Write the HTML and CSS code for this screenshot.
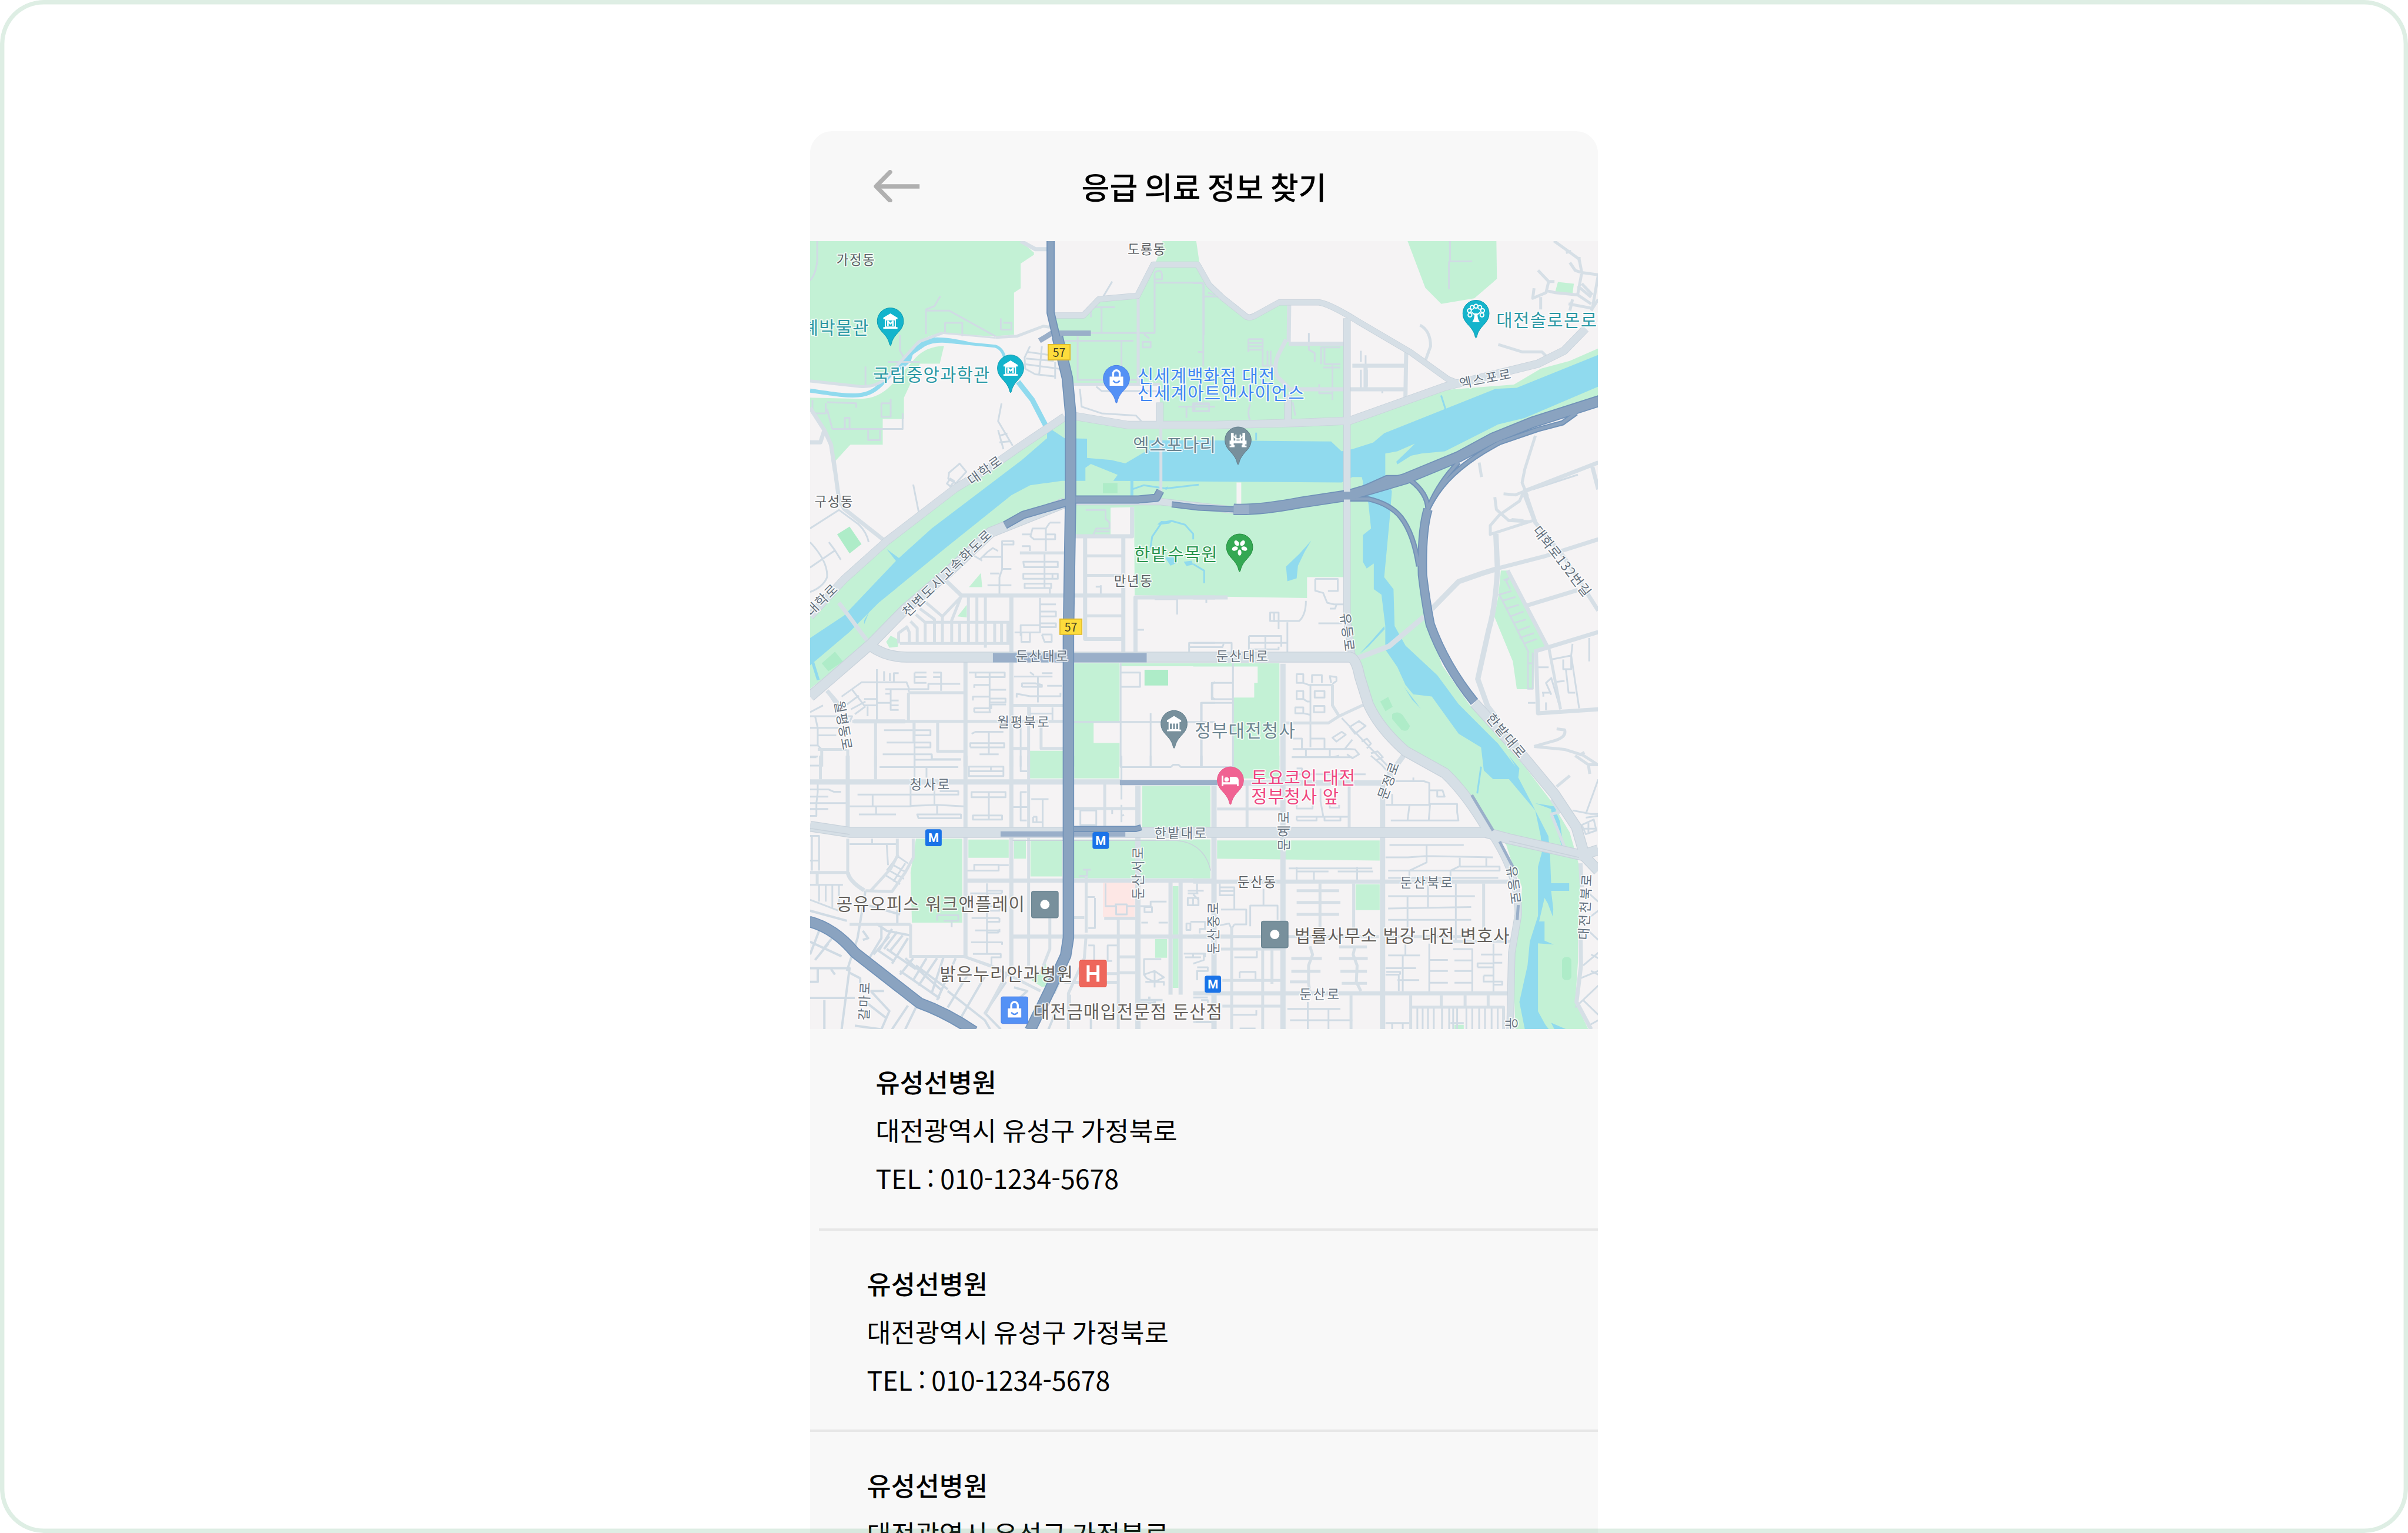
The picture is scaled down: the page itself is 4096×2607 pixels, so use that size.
FILE: index.html
```html
<!DOCTYPE html>
<html lang="ko">
<head>
<meta charset="utf-8">
<title>응급 의료 정보 찾기</title>
<link rel="stylesheet" href="styles.css">
</head>
<body>
<main class="stage">
<section class="phone">
<header class="topbar">
<svg class="back" viewBox="0 0 88 60"><path class="shaft" d="M4 30H84"/><path d="M30 4L4.500 30L30 56"/></svg>
<h1 class="title">응급 의료 정보 찾기</h1>
<span class="spacer"></span>
</header>
<svg class="map" viewBox="1480 440 1440 1440">
<defs>
<path id="pin" d="M0 45C-2 44-2 38-5 33C-11 21-24 16-24 0A24 24 0 0 1 24 0C24 16 11 21 5 33C2 38 2 44 0 45Z"/>
<g id="museum" fill="#fff"><path d="M0-14L13-6V-3H-13V-6ZM-10-3H10V11H-10ZM-13 11H13V14H-13Z"/></g>
<g id="bag"><path fill="#fff" d="M-13-4H13V14H-13Z"/><path fill="none" class="handle" d="M-6-3V-9A6 6 0 0 1 6-9V-3"/><path class="smile" d="M-6 4Q0 11 6 4"/></g>
<g id="metro"><rect class="metro" x="-15" y="-15.500" width="30" height="31" rx="4"/><text class="mark" y="8" font-size="22">M</text></g>
<g id="shield"><rect class="shield" x="-20" y="-14" width="40" height="28"/><text class="num" y="9">57</text></g>
</defs>
<rect class="land" x="1480" y="440" width="1440" height="1440"/>

<!-- parks and river banks -->
<g class="green">
<path d="M1925 579L1979 577L2008 546L2078 540L2107 483L2188 481L2209 522L2233 542L2277 579H2291L2337 553L2352 551V624L2461 630V771L2180 777L2119 775V701H1962L1935 615Z"/>
<path d="M1964 758L2061 777H2180L2466 771L2640 712L2766 702L2815 673L2868 659L2920 636V730L2810 759L2752 787L2689 828L2665 844L2611 918L2592 991V1054L2606 1122L2616 1161L2635 1215L2684 1286L2786 1400L2834 1463L2868 1520L2883 1573L2888 1593L2883 1700V1757L2878 1830L2902 1880H2769L2764 1757L2776 1680L2781 1620L2766 1587L2752 1543L2728 1517L2684 1453L2640 1410L2568 1369L2519 1318L2490 1268L2483 1215L2466 1194V1054H2388V1092L2073 1087L2072 926L2029 927V977H1964Z"/>
<path d="M1945 763L1857 820L1814 855L1765 879L1630 986L1528 1072L1480 1115V1258L1581 1176L1654 1115L1731 1043L1833 958L1945 917Z"/>
<g transform="translate(1460 220) scale(.48469 .40816)">
<path d="M41 539H835L885 590V600L835 640V750L810 770V958L735 965L540 955Q480 955 450 1000L330 1150Q280 1195 230 1190L41 1170Z"/>
<path d="M546 1008L530 1088H455L395 1240V1335H315V1450H193L135 1525L100 1410L41 1290V1240L230 1245Q300 1245 350 1180L440 1060Q480 1010 546 1008Z"/>
<path d="M1370 539H1497L1510 645H1340L1355 600Z"/>
</g>
<g transform="translate(2180 420) scale(.48469 .40816)">
<path d="M808 48H1143L1145 218L1060 305L935 330L875 258ZM1375 232L1435 240L1430 285L1365 275Z"/>
</g>
<g transform="translate(1460 840) scale(.48469 .35714)">
<path d="M685 578L690 650H640ZM632 740V805L597 800ZM328 930L345 898L375 920L372 955L340 960ZM1037 1040H1208V1345H1110V1447H1208V1568H1037ZM870 1487H995V1568H870ZM1212 1040H1568V1055H1212Z"/>
</g>
<g transform="translate(2180 840) scale(.48469 .35714)">
<path d="M0 1040H325V1568H152V1215H230V1140H243V1056H0ZM1160 565H1185L1330 960L1285 980L1283 1172H1220L1205 1030L1135 800L1150 700Z"/>
</g>
<g transform="translate(1460 1380) scale(.48469 .33333)">
<path d="M870 0H995V125H870ZM1037 0H1207V125H1037ZM440 455H615V915H425L420 640ZM638 460H790V560H638ZM810 460H855V565H810ZM872 460H992V662H872ZM1035 460H1550V672H1035ZM1293 165H1550V405H1293ZM1408 715H1430V1273H1408ZM1342 1005H1387V1108H1342ZM930 1140L945 1260L915 1268L875 1230Z"/>
</g>
<g transform="translate(2180 1380) scale(.48469 .33333)">
<path d="M152 0H325V125H152ZM0 175H65V405H0ZM0 460H65V672H0ZM90 465H703V575L90 565ZM612 705H703V847H612ZM985 1475H1020V1500H985Z"/>
</g>
</g>
<g class="deep">
<g transform="translate(1460 840) scale(.48469 .35714)"><path d="M190 340L235 430L190 478L143 380ZM1145 118H1200V170H1145ZM85 1040L135 980L165 1030L110 1080ZM1302 1073H1391V1153H1302Z"/></g>
<g transform="translate(2180 840) scale(.48469 .35714)"><path d="M705 1235L735 1212L752 1262L725 1285ZM750 1300Q770 1280 790 1305L817 1360Q810 1395 785 1380L750 1325Z"/></g>
<rect x="2854" y="1748" width="17" height="42" rx="7"/>
</g>
<path class="care" d="M2015 1612H2073V1675H2015Z"/>

<!-- water -->
<g class="water">
<path d="M1480 1165L1542 1124L1639 1022L1702 965L1867 840L1913 800V779L1945 800L1986 801V836L2030 840L2056 846L2100 820V804H2180L2432 806L2451 824L2471 820L2509 808L2529 791L2732 710L2771 708L2920 648V706L2786 763L2737 775L2640 824L2597 828L2578 832L2553 848L2551 843L2575 820L2585 810L2553 824L2531 828V869L2543 897L2539 947L2534 1001L2529 1054L2546 1076L2548 1143L2568 1179L2626 1233L2665 1286L2737 1358L2769 1400L2757 1380L2776 1403L2774 1420L2800 1470L2829 1527L2832 1560L2834 1613H2867V1627H2834L2838 1660L2837 1674L2828 1650L2822 1640L2812 1683H2822V1718L2839 1725L2810 1723V1847L2828 1880H2786L2776 1830L2791 1763L2795 1720L2810 1673V1583L2817 1557L2815 1527L2805 1480L2757 1423H2728L2711 1407L2706 1365L2665 1340L2616 1272L2582 1268L2568 1251L2553 1218L2531 1186V1143L2524 1086L2510 1076V1029L2497 1038L2490 1026V977L2505 965L2500 918L2490 900V879L2488 871H2471L2451 881L2034 878L2042 867L1993 847L1983 854V878H1940L1882 886L1848 904L1727 1001L1605 1101L1552 1154L1480 1215Z"/>
<path d="M1652 658Q1675 626 1695 618Q1715 612 1770 624L1752 628Q1710 621 1690 632ZM1644 672Q1655 650 1668 646L1664 660L1646 676Z"/>
<g transform="translate(2180 840) scale(.48469 .35714)"><path d="M445 412L420 470L395 540L390 605L355 620L350 545L400 480ZM720 850L675 920L628 990L660 955L722 865ZM795 1160L858 1272L825 1225Z"/></g>
<g transform="translate(1460 840) scale(.48469 .35714)"><path d="M1350 330L1365 312L1405 315L1395 325L1365 330ZM1380 500L1410 490L1425 525L1400 540ZM1450 520L1480 515L1485 535L1460 542ZM1370 145L1390 135L1385 152ZM330 455L380 505L370 525ZM245 840V820L265 772Z"/></g>
<path d="M2805 1467L2860 1476L2842 1480L2850 1500L2856 1543L2842 1500L2835 1478ZM2806 1850L2830 1880H2812ZM2834 1868L2862 1880H2840Z"/>
</g>
<g class="stream">
<path class="s7" d="M1480 713C1560 725 1585 730 1615 696L1640 670"/>
<path class="s5" d="M1640 670L1680 632Q1692 622 1717 622L1818 632Q1832 636 1836 655"/>
<path class="s9" d="M1860 697L1886 730L1911 778"/>
<path class="s5" d="M1485 1210L1495 1242M2068 878V905"/>
<path class="s3" d="M2070 893L2090 886L2130 892L2190 885M2102 1000L2105 980L2122 955L2140 951L2165 958L2180 975V985M2180 1030L2200 1042V1065M2295 790V804M2633 722L2641 747M2706 1400L2699 1449M2835 1478L2855 1545"/>
</g>

<!-- minor streets -->
<g class="street minor s3">
<g transform="translate(1460 220) scale(.48469 .40816)">
<path d="M68 539V630Q62 690 41 715M478 955V845L510 830L532 785M478 850H565L740 965M550 955V905H615V965M760 935V885M760 935H800V905H770M380 960V1030L395 1060M250 1100V1190M335 1080H455M345 1245V1325H310V1265H345M105 1260L215 1265V1285M50 1250V1310H100V1265M125 1380H390V1310M260 1385V1430H305V1385M172 1380V1330H190V1380M105 1290L125 1380M870 1010L850 1060L852 1110L890 1135L965 1145M860 1035L950 1050M855 1065L960 1075M850 1090L980 1110M915 1010L905 1135M965 1080V1155M763 1265L750 1345L805 1455M750 1385L770 1470M755 1410L785 1400M755 1440L795 1435M1110 835H1190M1140 835V950M1100 850V880M990 950H1340V680M1340 725H1515L1525 735V960M975 985H1260M1215 985V1180M1050 965V1160H1300M1145 790L1180 720M1340 680Q1365 660 1368 690V710H1340M1300 955L1320 975M1295 990H1325V1015H1295ZM1058 1200L1065 1280L1140 1310L1270 1320L1290 1345M1120 1190L1140 1210H1350M1430 1280H1568M1460 1280V1330M1485 1265H1545V1300H1485Z"/>
</g>
<g transform="translate(2180 420) scale(.48469 .40816)">
<path d="M0 237H38V610M38 297H100M55 280L80 290M208 488H262V610M208 505H262M208 520H262M208 535H262M208 488V545M280 540V605M292 540V605M262 607H310M436 460V535L458 550V590M482 600V525H555M495 525V600H555M525 600V760M490 615H555M475 690V730H525M632 540V590M650 560V610M632 625V720M655 625V700M968 48V140H1052M964 140V265M713 712V730M215 780Q200 820 218 860M375 770L385 830M0 780H60V810H5V780M18 545H35"/>
</g>
<g transform="translate(1460 840) scale(.48469 .35714)">
<path d="M605 18L565 65L562 95L590 120L630 60ZM557 120L570 95L585 108L570 135ZM430 125L452 275M41 350L150 255L225 330Q255 370 262 420M41 550L135 462L112 420M135 462L157 510M41 420Q110 520 105 600Q90 650 41 675M945 320H985M945 320L930 350H880L872 390L885 405H930M930 350V465M840 380H872M930 380H965V405H930M840 440H870V465M765 495V415H808V432H765M710 470L730 450L750 465M660 490L690 515M680 510L710 470M690 495H765V560L755 600V685M765 557H800M720 580H755M710 640H800M845 520H975V548H848ZM845 582H975V607H845ZM925 480V655M850 632H950V655H850ZM945 650V690M955 580V605M1080 255H1155V300L1170 320V350H1120L1108 385M1120 365H1170M1118 648H1140M1137 640V685M908 705V885M908 738H968M908 775H968V800H908M908 835H968V855H908M835 900V845H908M812 882H908M838 885V930H870V885M915 892H952V930H925L915 892M1340 712H1425V790M1535 710V730M1275 868H1300M1568 935H1470V980M1470 957H1568M293 1070V1330M320 1080V1130M342 1090V1130M357 1140V1090H375M160 1210L235 1137H405L413 1165V1185M180 1250L225 1205M195 1275L250 1235M200 1175L245 1255H290M210 1300L250 1260M258 1260V1310M245 1222H290M290 1242H345M325 1172H487V1145H607M345 1172V1278H375M345 1195H325M345 1230H375M345 1255H375M435 1087H480M435 1087V1140H480M435 1110H480M505 1087H535V1180M505 1110H535M640 1087H775V1110H665V1090M718 1087V1290M660 1165V1150H718V1175H780M655 1230V1210H718V1220H778V1240H718M660 1290V1270H724V1250H780M660 1290H724M810 1107H955M870 1085L885 1100M915 1090H955M900 1110V1240M840 1160V1142H890L915 1150V1160H840M935 1155H990M820 1215V1195L870 1208H985V1190M320 1382H495V1408H435V1345M330 1445H495V1470H435M435 1440V1568M315 1505H500V1530H610M500 1530V1505M650 1400L665 1390H770M645 1470V1448H773V1470H645M715 1390V1505M680 1505H752M870 1265V1340M955 1265V1330M865 1297H955M835 1345V1568M41 1310H200L190 1340M41 1290L90 1255M60 1310L70 1370V1460L85 1480M41 1370H150M70 1408H140M41 1460H70M41 1520H65M1212 1087H1285V1160H1212M1212 1040V1568M1037 1340H1568M1325 1295V1568M1515 1568V1242H1568M1568 1135L1558 1145V1215L1568 1225"/>
</g>
<g transform="translate(2180 840) scale(.48469 .35714)">
<path d="M460 608H545V670H508M460 608V668L490 680L505 730L530 738H565M540 740L535 760H515M425 720Q425 790 400 823H290V780H322V865M305 780V828M355 830V990M472 835H560M210 900H332V935H355M210 900V970M210 935H332M210 968H322V955M272 900V968M332 900V955M0 935H145V990M0 957H110L115 940M150 1040V1568M150 1140H70V1223H150M32 1568V1242H150M390 1095H415V1140H390ZM448 1140V1100H485V1140M520 1140L515 1105L540 1110V1130L525 1145M415 1140L435 1150H525V1180M442 1150V1470M390 1182H415V1222H390ZM458 1182H495V1215H458ZM415 1222L430 1235H442M385 1265H415V1295H385ZM455 1258H495V1290H455ZM415 1295L440 1303M375 1425H410V1475M440 1425H495V1475M375 1478H590M372 1520H600M425 1478V1520M515 1478V1520M525 1420L560 1390L575 1405L540 1440ZM590 1365L625 1335L650 1360L610 1400ZM560 1320L735 1568M590 1478L610 1480L625 1505L600 1525L580 1505M635 1440L655 1425L670 1450L655 1475M670 1500L695 1490L715 1520L690 1535M570 1480L600 1430M1300 1060H1340M1350 1020L1425 1000V1070H1395V1020M1430 940L1425 1000L1455 1270M1405 1070L1415 1190H1440M1350 1200L1330 1140L1350 1115L1385 1275M1315 1190H1345M1320 1210V1190M1330 1240V1280M1365 1135L1400 1130M1262 1242H1290M1493 910V1030M1170 615L1190 605L1180 620L1195 660M1150 690L1200 670M1165 720L1215 700M1180 760L1228 740M1195 800L1245 775M1205 835L1255 815M1220 875L1270 850M1230 910L1285 885M1245 940L1295 915M1155 690L1265 985M1262 985V1170H1280V985M1262 1040H1280M1280 150L1450 75"/>
</g>
<g transform="translate(1460 1380) scale(.48469 .33333)">
<path d="M41 55H80M41 5H70M303 63H600M435 0V22H610M500 0V22M480 60V120M435 20V120M640 60H770V112H640ZM640 85H770M723 60V85M835 0V85H860M220 213H600V195H530M277 213V278M190 278H420V160M420 275L520 270L620 278M510 160V270M290 278V320M225 322H365M520 270V322M445 322H610V343H450ZM650 200H778V228H650ZM715 200V350M655 328H765V350H655ZM858 200H835V355H858M800 282H865M875 238H940M918 238V400M882 335H895V365H920M882 335V365H895M41 185H110L130 198H158M41 225H110M41 260H190M41 292H110M70 150V200L65 260V330H41M41 440H75V630M48 440V630M41 575H75M190 485H365M275 455V485M330 485L335 600M632 630H752V598H660V630M752 600H790M41 708H165M75 708V800M100 708V800M125 708V840M150 708V850L41 790M340 630L395 675M355 600L405 640M325 655L380 705M370 550L410 590M375 545L330 630M400 590L355 690M645 755H765M708 700V1090M708 740H765V755M708 825H755V850H708M675 890H755M650 890H708M755 890V910H708M663 958H750V970H708M755 950V968M648 1023H765V1037M655 1087H760V1105H725V1150M520 905V875H600V905H545M575 905V940M1115 780V945H1090M1085 775H1115M1090 1040H1112V1180M1200 1040H1163V1125H1180M1060 300V380H1120V300ZM1180 290V320M1215 270V330L1225 325M1215 330V365M1070 625H1100M1085 625V660H1055M1155 700V825H1195V870H1235V815H1190M1235 825H1268M1285 825H1325V800H1385M1302 830H1330V858H1302ZM1290 915H1315M1355 915H1390M1300 1200V1115H1365M1300 1200L1340 1180L1375 1215L1340 1240L1310 1220ZM1340 1180V1270M1305 1240H1375V1260M1450 1085H1530V1105M1485 1085V1105M1455 1105H1515M1530 1180H1500V1230M1465 740H1525M1465 755H1505M1465 780H1505V820H1465ZM1485 780V820M1500 700V760M1460 920H1475V955H1460ZM1475 910H1530V950H1510V975M1215 240V1M1210 63H1400L1410 50H1430L1440 63H1568M1325 0V63M1515 0V63"/>
<path class="s4" d="M250 740L220 1000L180 1180M41 850L180 905M290 920L330 960L420 985M310 920V1000L260 1120M210 800L380 870M370 845V920M75 960L41 1090M41 1020L160 1100M110 1030L60 1120M41 1165H190L160 1500M70 1165V1240H41M120 1170L135 1200M41 1328H210M95 1340V1500M130 990L90 1060M350 950L300 1070L360 1130M370 965L320 1060M390 985L340 1075M340 990L280 1090M410 1000L350 1140M430 1110L380 1200M480 1110L430 1230M520 1110L450 1260M545 1100L500 1300M590 1110L520 1340M400 1110L540 1290M420 1100H620L730 1160M380 1180L530 1330M440 1150L560 1280M330 1060L440 1170M190 1190L230 1220V1250M270 1290L340 1400L310 1500M250 1350L330 1440M240 1290H320M410 1370L350 1500M440 1380L400 1500M210 1480L310 1500M560 1290L700 1450L720 1500M700 1210L600 1460M640 1190L560 1380M810 1270L860 1290L830 1330M780 1240L700 1410L760 1500M1020 1310V1370M980 1360L940 1500M1320 1320V1340M1340 1340V1355H1285M1285 1340H1370M1100 1440V1500M1495 1460H1568M240 960L260 1000L240 1010"/>
</g>
<g transform="translate(2180 1380) scale(.48469 .33333)">
<path d="M372 8H530L550 0M32 0V63M0 63H150M370 102H650M410 102V70H390M480 180V250L490 330M390 270V290H450V270M515 270V285H550V270M390 355V335H587M390 355H465V335M495 330V355H555V330M725 270H890V150L870 140H765L710 50L670 0M830 120V140M890 190H920V225H948L940 190H920M890 265H995V310L1000 355H745M815 275L808 355M893 265L888 355M750 210V265M740 490H1020M880 490V585L815 630V685M735 630H970M725 557H810L880 550L1130 557M1005 560V605L970 630V685M1005 608H1155V630H970M1105 560V608M735 670H1150M360 618H675M390 685V610M390 635H510M545 635H678M455 635V680M618 610V680M100 700V765H155V722H100M100 742H155M155 765V840M105 843H200V925H155M265 730V820M215 935V822H318V900M100 930L135 920L145 950L155 925M735 770H1062M735 838L1048 830M735 900H1048M808 770V940M885 710V835M990 700V1015M735 1095H855M800 1030V1095M790 1095V1300M725 1165H840M725 1200H775V1290M728 1185H780V1200M770 1230H852M890 1030V1300M890 1120H960M890 1180H960M890 1245H960M980 1060H1052V1300M985 1122H1052M985 1180H1052M985 1245H1052M1132 1030V1300M1085 1090H1165M1132 1135H1165M1072 1160V1138H1132M1072 1160H1132M1095 1205H1130M1095 1205V1238H1165V1255H1130M355 1388H555M365 1450H475M475 1450H600M510 1388V1500M432 1350V1500M150 1420H238V1395M175 1495H235M0 1085H40V1120L0 1140M15 1160H55V1180H15V1230M0 760L20 790V820H0M0 910H40M30 1340H55V1355M0 1325H55M845 1380V1500M865 1380V1500M885 1380V1500M907 1380V1500M938 1380V1500M965 1380V1500M980 1380V1500M995 1380V1500M1030 1380V1500M1052 1380V1500M1078 1380V1500M1100 1380V1500M1125 1380V1500M1148 1380V1500M970 1465H1020M725 1465H815M750 1465V1500M790 1465V1500M175 1185H235V1230M175 1185V1220M240 1070V1105H155M0 1460H65M365 1240H435"/>
<path d="M1470 1150L1527 1080M1460 1220L1527 1180M1500 1180L1527 1200M1480 740L1527 800M1500 880L1527 850M1490 960L1527 1010M1440 1380L1527 1260M1470 1340L1527 1420M1490 1480L1527 1450M1430 300L1500 320L1527 320M1480 340L1527 330M1465 380L1510 350L1520 410L1480 430ZM1470 400H1520M1490 370V430M1527 130L1480 320M1500 1090L1527 1110"/>
</g>
</g>

<!-- local roads -->
<g class="street s5">
<g transform="translate(1460 220) scale(.48469 .40816)"><path d="M1278 785V1180M1035 1180H1360M740 970L820 965L920 920L950 925M540 950L450 990L320 1160Q280 1195 230 1190L41 1165"/><path class="s3" d="M540 950L740 972"/></g>
<g transform="translate(2180 420) scale(.48469 .40816)"><path d="M855 425Q895 450 895 520L875 585M1150 512L1240 545H1315L1340 575M1360 48L1415 95L1455 130L1465 190L1450 285M1465 190L1527 200L1505 350L1415 330M1420 145L1440 180L1465 190M1405 100L1425 95M1455 120V140M1300 180L1340 230L1330 280L1280 305L1285 260M1310 300V355M1340 230H1362M1330 270L1365 280L1450 290L1500 330M1450 250L1500 300M1465 240L1505 290M1430 310L1420 360M1527 310L1500 360M1290 920L1250 1070L1240 1130L1260 1190M1078 1040L1087 1105M1170 1180L1215 1185L1245 1170M1137 1195L1143 1250L1190 1300L1270 1305M1200 1295L1245 1300"/></g>
<g transform="translate(1460 840) scale(.48469 .35714)"><path d="M470 830H800M380 938H800M610 700L540 800V938M475 725L540 800M455 760L510 815V938M440 790L475 830V938M420 825L445 860V938M405 850L415 880V938M375 938V885L410 850M610 700L575 820V938M605 830V938M638 700V938M670 700V938M702 700V960M737 830V938M763 830V938M787 830V938M832 475H1000M412 1190H627M412 1190V1330M200 1337H1000M433 1345V1440M522 1345V1490H620M288 1345V1568M805 1255H1000M865 1255V1568M912 1345V1475H1000M805 1475H870M1078 490H1222M1078 590H1222M1078 797H1222M70 1480H180M85 1480V1568M183 1480V1568M140 1250L105 1180"/></g>
<g transform="translate(2180 840) scale(.48469 .35714)"><path d="M1245 165L1230 210L1155 280L1120 335V380L1280 310M350 1345H510L550 1310L645 1250M550 1310L525 1255V1150M1340 955L1385 1275M1285 1465L1350 1440Q1410 1420 1400 1380L1370 1375M1285 1465L1400 1480L1470 1510L1527 1560M1455 1510L1475 1495"/></g>
<g transform="translate(1460 1380) scale(.48469 .33333)"><path d="M80 0V130M288 0V130M865 0V1150M1152 150V400M1035 290H1278M370 455V550L345 620L270 740M430 455V560L400 640L350 745L250 740M190 925H420M420 925V1100M41 640H183V455M68 640V710M1082 660V970M1082 980L1075 1110L1015 1303V1500M1203 890V1500M1150 892H1268M1035 888H1075M945 890V1060L910 1190M1205 1103H1268M1205 1190H1268M620 1100L720 1150L910 1290M800 1150L700 1420M980 1240L960 1303M1160 1195H1200M415 1100H620M1000 1242H1200"/></g>
<g transform="translate(2180 1380) scale(.48469 .33333)"><path d="M203 160V400M90 292H330M588 160V400M145 940V1500M262 1060V1500M297 1060V1250M105 1060H330M110 1232H330M110 1373H330M390 740H550M390 805H555M390 870H550M478 700V940M605 700V970M1095 700V970M370 1112H485M550 1112H658M370 1182H480M555 1182H655M365 1240H440M560 1248H655M440 1045L450 1090L435 1150V1250L440 1290M610 1045L603 1090L618 1150L615 1240L632 1290M550 1048H655M595 1312V1500M820 1312V1500M935 1312V1378M1025 1312V1378M1112 1312V1378M820 1378H1170V1500M0 992H700M725 992H1050M980 1018H1200M1370 170L1420 110M1440 0L1490 50L1495 100M1490 50H1527M1350 240L1380 310L1350 320L1400 500"/></g>
</g>
<g class="street s7">
<g transform="translate(1460 220) scale(.48469 .40816)"><path d="M41 1285L95 1385L80 1440H41M95 1385L120 1450L135 1568M835 539L890 575H940"/></g>
<g transform="translate(2180 420) scale(.48469 .40816)"><path d="M362 320L360 500M350 490L320 560Q300 620 320 660L360 705M360 508H580M600 607H800M803 545L800 755M360 712H800M650 607V712M1505 1060L1527 1160M1245 1170L1527 1040M1250 1185L1290 1310"/></g>
<g transform="translate(1460 840) scale(.48469 .35714)"><path d="M130 0L150 200L170 250L320 410M150 730L265 940M540 600L612 693H1222M800 700V1568M1078 400V915H1222M1255 240V390H1040M1222 400V980M1268 980V703H1568M627 1030V1568M105 1180L150 1250M205 1337H400"/></g>
<g transform="translate(2180 840) scale(.48469 .35714)"><path d="M0 703H130M1185 565L1335 955M1255 745L1450 665M1285 980L1527 880M1292 980L1300 1295L1527 1275M1145 555L1330 490L1527 405M1250 160L1290 320L1400 500L1527 770"/></g>
<g transform="translate(1460 1380) scale(.48469 .33333)"><path d="M183 0V400M183 640Q190 690 245 738M627 0V1100M800 0V1150M630 685H1568M800 992H1568M1400 690V1310M1438 690V1310"/></g>
<g transform="translate(2180 1380) scale(.48469 .33333)"><path d="M0 690H1190M0 1303H1190M0 992H145M1460 590L1465 720M1460 960L1462 1150L1445 1350L1500 1500"/></g>
</g>

<!-- main roads -->
<g class="casing">
<path class="s10" d="M1925 576H1979L2008 546L2078 540L2107 483H2188L2209 520L2233 543L2277 578Q2285 582 2297 574L2337 552H2410Q2430 555 2480 586L2577 643L2645 692L2670 702"/>
<path class="s12" d="M2461 581V1130L2471 1205M2353 720V770M2119 735V775"/>
<path class="s14" d="M1480 1125L1542 1058L1620 988L1745 892L1814 850L1857 820L1945 761M1965 760L2061 776H2220L2374 772L2466 768L2640 706L2810 664L2858 640L2897 600"/>
</g>
<g class="street s9">
<path d="M1925 576H1979L2008 546L2078 540L2107 483H2188L2209 520L2233 543L2277 578Q2285 582 2297 574L2337 552H2410Q2430 555 2480 586L2577 643L2645 692L2670 702"/>
<path class="s10" d="M2461 581V1130L2471 1205M2353 720V770M2119 735V775"/>
<path d="M1480 1428H2050M2224 1430H2528L2568 1375M2480 1202L2538 1180L2602 1126M2616 1112L2665 1062L2708 1047L2737 1038M2733 975L2736 1040Q2732 1110 2720 1150L2700 1240L2718 1290L2735 1312"/>
<path d="M2079 1435V1880M2218 1435V1880M2344 1212V1880M2526 1430V1880"/>
</g>
<path class="street s12" d="M1480 1125L1542 1058L1620 988L1745 892L1814 850L1857 820L1945 761M1965 760L2061 776H2220L2374 772L2466 768L2640 706L2810 664L2858 640L2897 600"/>
<path class="street s5" d="M2121 775V900"/>
<path class="bridge" d="M2263.500 881V920"/>
<g class="casing s18">
<path d="M1480 1272L1515 1242L1591 1176L1654 1112L1731 1046L1810 972L1945 918M1591 1180Q1620 1201 1660 1200H2466Q2478 1202 2484 1235L2500 1286Q2520 1330 2568 1372L2640 1412Q2680 1450 2718 1515"/>
<path d="M1480 1509L1552 1520H2713L2757 1532L2890 1562L2920 1552M2694 1284L2786 1385L2840 1450L2880 1510L2896 1565L2920 1590"/>
<path class="s12" d="M2724 1522Q2776 1600 2774 1670L2762 1740L2759 1880M1964 916L2120 916L2260 932"/>
</g>
<g class="street s16">
<path d="M1480 1272L1515 1242L1591 1176L1654 1112L1731 1046L1810 972L1945 918M1591 1180Q1620 1201 1660 1200H2466Q2478 1202 2484 1235L2500 1286Q2520 1330 2568 1372L2640 1412Q2680 1450 2718 1515"/>
<path d="M1480 1509L1552 1520H2713L2757 1532L2890 1562L2920 1552M2694 1284L2786 1385L2840 1450L2880 1510L2896 1565L2920 1590"/>
<path class="s10" d="M2724 1522Q2776 1600 2774 1670L2762 1740L2759 1880M1964 916L2120 916L2260 932"/>
</g>
<path class="casing s1" d="M1850 1535H2150Q2200 1540 2212 1590M1480 1513L1552 1524M2757 1536L2885 1566"/>

<!-- expressways -->
<path class="slow s16" d="M1814 1201H2095"/>
<path class="slow s9" d="M1828 1523H2056M2046 1429H2224M1934 608H1993M1899 622L1922 608"/>
<path class="slow s5" d="M2689 1452L2728 1517M2740 1537L2764 1583M2774 1653L2772 1680"/>
<g class="edge">
<path class="s10" d="M1962 1514H2075L2085 1511M2141 921L2190 927L2256 930"/>
<path class="s14" d="M1965 912H2080L2113 909L2120 896M1836 959L1870 940L1950 917"/>
<path class="s14" d="M1919.500 440V571L1931 620L1943 669"/>
<path class="s20" d="M1932 615L1950 690L1956 755V910L1952 1160V1713L1947 1745L1917 1810L1882 1882"/>
<path class="s20" d="M1478 1683Q1525 1695 1562 1740L1680 1832Q1730 1850 1780 1884"/>
<path class="s9" d="M2466 911H2500Q2540 920 2560 945Q2583 975 2592 1034M2577 877Q2608 900 2609 930M2665 844Q2630 880 2611 925M2880 754L2855 772L2810 784L2740 808Q2660 850 2626 900T2603 980M2480 896L2534 872H2562"/>
<path class="s20" d="M2254 930Q2300 932 2374 918L2466 904L2568 874L2665 834L2728 800L2800 771L2925 731"/>
<path class="s16" d="M2609 930Q2597 970 2599 1050Q2605 1100 2613 1140Q2640 1215 2694 1282"/>
</g>
<g class="express">
<path class="s7" d="M1962 1514H2075L2085 1511M2141 921L2190 927L2256 930"/>
<path class="s10" d="M1965 912H2080L2113 909L2120 896M1836 959L1870 940L1950 917"/>
<path class="s10" d="M1919.500 440V571L1931 620L1943 669"/>
<path class="s16" d="M1932 615L1950 690L1956 755V910L1952 1160V1713L1947 1745L1917 1810L1882 1882"/>
<path class="s16" d="M1478 1683Q1525 1695 1562 1740L1680 1832Q1730 1850 1780 1884"/>
<path class="s5" d="M2466 911H2500Q2540 920 2560 945Q2583 975 2592 1034M2577 877Q2608 900 2609 930M2665 844Q2630 880 2611 925M2880 754L2855 772L2810 784L2740 808Q2660 850 2626 900T2603 980M2480 896L2534 872H2562"/>
<path class="s16" d="M2254 930Q2300 932 2374 918L2466 904L2568 874L2665 834L2728 800L2800 771L2925 731"/>
<path class="s12" d="M2609 930Q2597 970 2599 1050Q2605 1100 2613 1140Q2640 1215 2694 1282"/>
</g>
<path class="slow s16" d="M2254 930H2282"/>
<path class="street s10" d="M2461 771V898M2461 912V960"/>

<!-- street and district names -->
<g class="label area">
<text x="1528" y="483" textLength="70">가정동</text>
<text x="2060" y="464" textLength="69">도룡동</text>
<text x="1488" y="924" textLength="70">구성동</text>
<text x="2035" y="1070" textLength="70">만년동</text>
<text x="2261" y="1620" textLength="70">둔산동</text>
</g>
<g class="label road">
<text x="1856" y="1207" textLength="95">둔산대로</text>
<text x="2222" y="1207" textLength="95">둔산대로</text>
<text x="1822" y="1327" textLength="95">월평북로</text>
<text x="1662" y="1441" textLength="73">청사로</text>
<text x="2109" y="1530" textLength="95">한밭대로</text>
<text x="2558" y="1621" textLength="96">둔산북로</text>
<text x="2374" y="1825" textLength="73">둔산로</text>
<g text-anchor="middle">
<text transform="translate(2715 700) rotate(-11)" textLength="95">엑스포로</text>
<text transform="translate(2847 1030) rotate(52)" textLength="155">대화로132번길</text>
<text transform="translate(1804 866) rotate(-36)" textLength="70">대학로</text>
<text transform="translate(1507 1102) rotate(-45)" textLength="70">대학로</text>
<text transform="translate(1736 1053) rotate(-44)" textLength="215">천변도시고속화도로</text>
<text transform="translate(1532 1326) rotate(80)" textLength="90">월평동로</text>
<text transform="translate(2453 1155) rotate(83)" textLength="70">유등로</text>
<text transform="translate(2757 1617) rotate(83)" textLength="70">유등로</text>
<text transform="translate(2753 1893) rotate(90)" textLength="70">유등로</text>
<text transform="translate(2745 1349) rotate(50)" textLength="96">한밭대로</text>
<text transform="translate(2088 1595) rotate(-90)" textLength="96">둔산서로</text>
<text transform="translate(2226 1695) rotate(-90)" textLength="95">둔산중로</text>
<text transform="translate(2354 1518) rotate(-90)" textLength="72">문예로</text>
<text transform="translate(2545 1429) rotate(-70)" textLength="70">문정로</text>
<text transform="translate(2905 1657) rotate(-87)" textLength="120">대전천북로</text>
<text transform="translate(1588 1829) rotate(-88)" textLength="70">갈마로</text>
</g>
</g>

<!-- place names -->
<g class="label place">
<g class="teal">
<text x="1587" y="610" text-anchor="end" textLength="152">화폐박물관</text>
<text x="1595" y="696" textLength="213">국립중앙과학관</text>
<text x="2734" y="596" textLength="245">대전솔로몬로파크</text>
</g>
<g class="blue">
<text x="2078" y="698" textLength="251">신세계백화점 대전</text>
<text x="2078" y="729" textLength="305">신세계아트앤사이언스</text>
</g>
<g class="slate">
<text x="2070" y="824" textLength="151">엑스포다리</text>
<text x="2183" y="1346" textLength="183">정부대전청사</text>
</g>
<text class="leaf" x="2072" y="1023" textLength="152">한밭수목원</text>
<g class="rose">
<text x="2286" y="1432" textLength="190">토요코인 대전</text>
<text x="2286" y="1466" textLength="160">정부청사 앞</text>
</g>
<g class="shop">
<text x="1528" y="1663" textLength="344">공유오피스 워크앤플레이</text>
<text x="1717" y="1790" textLength="243">밝은누리안과병원</text>
<text x="1888" y="1859" textLength="345">대전금매입전문점 둔산점</text>
<text x="2365" y="1720" textLength="393">법률사무소 법강 대전 변호사</text>
</g>
</g>

<!-- markers -->
<use href="#shield" transform="translate(1935 643)"/>
<use href="#shield" transform="translate(1956.500 1144.500)"/>
<use href="#metro" transform="translate(1705.500 1530)"/>
<use href="#metro" transform="translate(2011 1535)"/>
<use href="#metro" transform="translate(2216 1797.500)"/>
<g transform="translate(1626.700 586)" class="m-teal"><use href="#pin"/><use href="#museum"/><path class="hole" d="M-8-1H8V10H-8Z"/><path class="em" d="M-4.500 9V0.500L0 5L4.500 0.500V9"/></g>
<g transform="translate(1846.300 672)" class="m-teal"><use href="#pin"/><use href="#museum"/><path class="hole" d="M-8-1H8V10H-8Z"/><path class="em" d="M-4.500 9V0.500L0 5L4.500 0.500V9"/></g>
<g transform="translate(2145 1321.500)" class="m-slate"><use href="#pin"/><use href="#museum"/><path class="hole" d="M-7.500 0H-4V10H-7.500ZM-1.700 0H1.700V10H-1.700ZM4 0H7.500V10H4Z"/></g>
<g transform="translate(2039.700 691)" class="m-blue"><use href="#pin"/><use href="#bag"/></g>
<g transform="translate(2696.700 572)" class="m-teal"><use href="#pin"/><path fill="#fff" d="M-7 16Q-2 9-3 0H3Q2 9 7 16Z"/><g class="leafs"><circle cx="-11" cy="3" r="3.500"/><circle cx="-12" cy="-5" r="3.500"/><circle cx="-7" cy="-11" r="3.500"/><circle cy="-13" r="3.500"/><circle cx="7" cy="-11" r="3.500"/><circle cx="12" cy="-5" r="3.500"/><circle cx="11" cy="3" r="3.500"/><path d="M0 4L-8-2M0 4L8-2"/></g></g>
<g transform="translate(2262 803.500)" class="m-slate"><use href="#pin"/><path fill="#fff" d="M-13-13H-8V1H8V-13H13V1H15.500V8H12.500V10H15.500V13H6.500V9H8V6H-8V9H-6.500V13H-15.500V10H-12.500V8H-15.500V1H-13Z"/><path class="cable" d="M-4-10V2M4-10V2M-8-8Q-6-2 0-2T8-8"/></g>
<g transform="translate(2264.800 999)" class="m-green"><use href="#pin"/><g fill="#fff"><ellipse cy="-9" rx="3.800" ry="5.500" transform="rotate(-36)"/><ellipse cy="-9" rx="3.800" ry="5.500" transform="rotate(36)"/><ellipse cy="-9" rx="3.800" ry="5.500" transform="rotate(-108)"/><ellipse cy="-9" rx="3.800" ry="5.500" transform="rotate(108)"/><ellipse cy="10" rx="3.300" ry="5.500"/></g></g>
<g transform="translate(2248 1424.500)" class="m-rose"><use href="#pin"/><path fill="#fff" d="M-16-8H-13V4H-1V-6H9Q15-5 15 0V11H12V8H-13V11H-16Z"/><circle cx="-7" cy="-1" r="4" fill="#fff"/></g>
<g transform="translate(1909 1652)" class="m-slate"><rect x="-24.500" y="-24.500" width="49" height="49" rx="3"/><circle r="8.500" class="dot"/></g>
<g transform="translate(2329 1706.700)" class="m-slate"><rect x="-24.500" y="-24.500" width="49" height="49" rx="3"/><circle r="8.500" class="dot"/></g>
<g transform="translate(1997 1778)" class="m-red"><rect x="-24.500" y="-24.500" width="49" height="49" rx="3"/><path class="aitch" d="M-9-15V15M9-15V15M-9 0H9"/></g>
<g transform="translate(1853.500 1845)" class="m-blue"><rect x="-24.500" y="-24.500" width="49" height="49" rx="3"/><use href="#bag"/></g>
</svg>
<ul class="list">
<li class="item first"><strong>유성선병원</strong><span>대전광역시 유성구 가정북로</span><span>TEL : 010-1234-5678</span></li>
<li class="item"><strong>유성선병원</strong><span>대전광역시 유성구 가정북로</span><span>TEL : 010-1234-5678</span></li>
<li class="item"><strong>유성선병원</strong><span>대전광역시 유성구 가정북로</span></li>
</ul>
</section>
</main>
</body>
</html>
```
FILE: styles.css
```css
/* 1rem = 10 design pixels */
html { font-size: 9.3091px; }
* { box-sizing: border-box; }
body { margin: 0; background: #fff; color: #000; font-family: "Noto Sans CJK KR", "Noto Sans", sans-serif; }

.stage { position: relative; width: 100vw; height: 100vh; overflow: hidden; padding-top: 24rem; border-radius: 8rem; display: flex; justify-content: center; align-items: flex-start; }
.stage::after { content: ""; position: absolute; inset: 0; box-shadow: inset 0 0 0 .8rem rgba(92, 172, 122, .2); border-radius: 8rem; pointer-events: none; }
.phone { width: 144rem; height: 300rem; flex: none; background: #f8f8f8; border-radius: 4rem 4rem 0 0; overflow: hidden; }

.topbar { height: 20rem; padding: 0 11.6rem; display: grid; grid-template-columns: 8.8rem 1fr 8.8rem; align-items: center; }
.back { width: 8.8rem; height: 6rem; fill: none; stroke: #b0b0b0; stroke-width: 8; stroke-linejoin: round; stroke-linecap: round; }
.shaft { stroke-linecap: butt; }
.title { margin: .2rem 0 0; font-size: 5.6rem; font-weight: 500; line-height: 8rem; text-align: center; white-space: nowrap; word-spacing: -.066em; }

.map { display: block; width: 144rem; height: 144rem; overflow: hidden; fill: none; }
.land { fill: #f5f3f4; }
.green { fill: #c3f1d5; }
.deep { fill: #aeecc8; }
.care { fill: #fde7e5; }
.water { fill: #90daee; }
.stream { stroke: #90daee; }
.street { stroke: #d6dfe6; }
.minor { stroke: #d0dbe4; }
.casing { stroke: #c8d2db; }
.bridge { stroke: #f5f3f4; stroke-width: 8; }
.slow { stroke: #9aafc9; }
.edge { stroke: #7192b8; }
.express { stroke: #8aa3c0; }
.map path { vector-effect: non-scaling-stroke; stroke-linejoin: round; }
.s1 { stroke-width: 1.5px; }
.s3 { stroke-width: 3px; }
.s4 { stroke-width: 4px; }
.s5 { stroke-width: 5px; }
.s7 { stroke-width: 7px; }
.s9 { stroke-width: 9px; }
.s10 { stroke-width: 10.5px; }
.s12 { stroke-width: 12.5px; }
.s14 { stroke-width: 14px; }
.s16 { stroke-width: 16px; }
.s18 { stroke-width: 18.5px; }
.s20 { stroke-width: 19.5px; }

.label { paint-order: stroke; stroke: rgba(255, 255, 255, .75); stroke-width: 4px; stroke-linejoin: round; }
.area { font-size: 24px; fill: #5a5e63; }
.road { font-size: 24px; fill: #66727f; }
.place { font-size: 32px; }
.teal { fill: #2b98a5; }
.blue { fill: #4187f3; }
.slate { fill: #6c8491; }
.leaf { fill: #2d9650; }
.rose { fill: #ef4680; }
.shop { fill: #65605b; }

.shield { fill: #fddc3c; stroke: #e0bb2c; stroke-width: 2; }
.num { font-size: 21px; text-anchor: middle; fill: #3d3a22; }
.metro { fill: #1a73e8; }
.mark { font-family: Roboto, sans-serif; font-weight: 700; text-anchor: middle; fill: #fff; }
.m-teal { --pin: #14b4cc; fill: #14b4cc; stroke: #0d9aae; }
.m-slate { --pin: #78909c; fill: #78909c; stroke: #607d8b; }
.m-blue { --pin: #5491f5; fill: #5491f5; stroke: #4a80e8; }
.m-green { fill: #34a853; stroke: #238a3e; }
.m-rose { fill: #f06292; stroke: #e85588; }
.m-red { fill: #ee675c; stroke: #e64436; }
.m-teal [fill], .m-rose [fill], .m-slate [fill], .m-slate .dot, .m-green [fill] { stroke: none; }
#museum { stroke: none; }
.hole { fill: var(--pin); stroke: none; }
.em { fill: none; stroke: #fff; stroke-width: 2.6px; }
.handle { stroke: #fff; stroke-width: 3.4px; }
.smile { fill: none; stroke: var(--pin); stroke-width: 2.5px; }
.cable { fill: none; stroke: #fff; stroke-width: 2px; }
.aitch { fill: none; stroke: #fff; stroke-width: 5px; }
.dot { fill: #fff; }
.leafs { fill: none; stroke: #fff; stroke-width: 2; }

.list { margin: 0; padding: 0; list-style: none; }
.item { height: 36.8rem; padding: 5.2rem 0 0 10.4rem; border-bottom: 4px solid #e7e7e7; display: flex; flex-direction: column; font-size: 4.8rem; line-height: 8.8rem; white-space: nowrap; word-spacing: -.056em; }
.first { margin-left: 1.6rem; }
.item strong { font-weight: 500; }
```
